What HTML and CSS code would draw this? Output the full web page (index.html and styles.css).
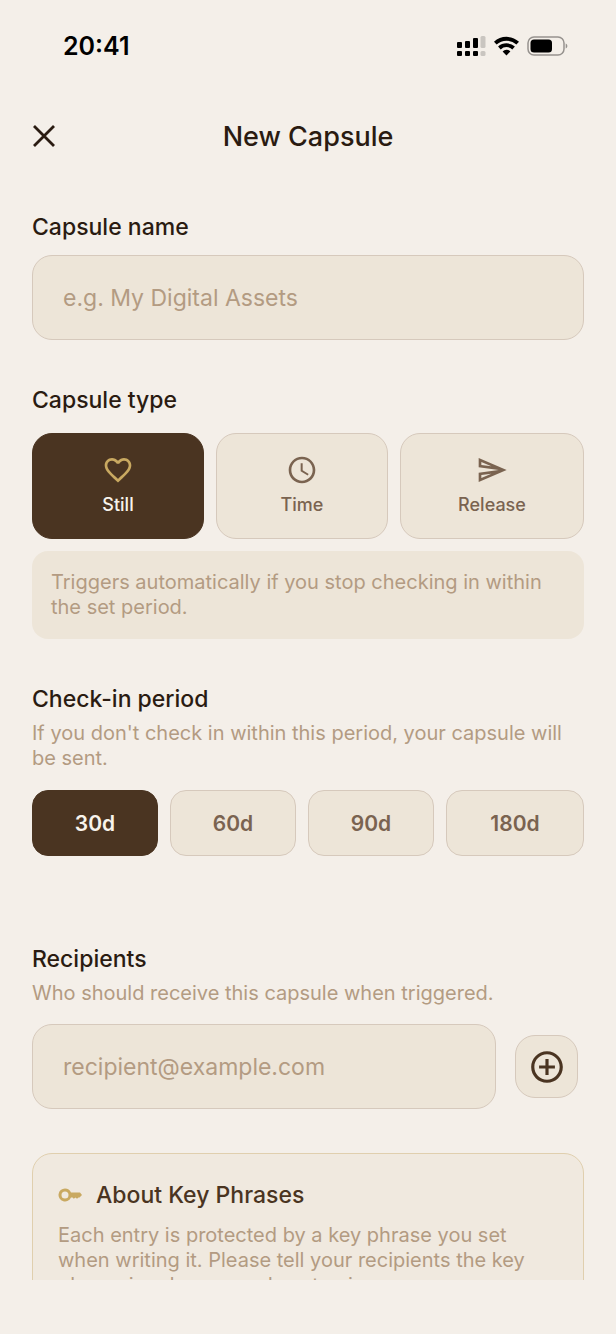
FILE: index.html
```html
<!DOCTYPE html>
<html lang="en">
<head>
<meta charset="utf-8">
<meta name="viewport" content="width=device-width, initial-scale=1">
<title>New Capsule</title>
<link rel="stylesheet" href="styles.css">
</head>
<body>
<div class="app">
  <div class="status">
    <span class="clock">20:41</span>
    <svg class="status-icons" width="112" height="22" viewBox="0 0 112 22" aria-hidden="true">
      <g fill="#000">
        <rect x="1" y="7" width="5" height="6" rx="1"/>
        <rect x="9" y="6" width="5" height="7" rx="1"/>
        <rect x="17" y="3" width="5" height="10" rx="1"/>
        <rect x="1" y="16" width="5" height="5" rx="1"/>
        <rect x="9" y="16" width="5" height="5" rx="1"/>
        <rect x="17" y="16" width="5" height="5" rx="1"/>
      </g>
      <g fill="#c9c5c0">
        <rect x="24.500" y="1" width="5" height="12" rx="1.500"/>
        <rect x="24.500" y="16" width="5" height="5" rx="1.500"/>
      </g>
      <g fill="none" stroke="#000" stroke-width="3.800">
        <path d="M39.300 8.200a16.300 16.300 0 0 1 22.400 0"/>
        <path d="M43.400 13a10.400 10.400 0 0 1 14.200 0"/>
      </g>
      <path d="M50.500 20.400l-3.900-4a5.700 5.700 0 0 1 7.800 0z" fill="#000"/>
      <rect x="72" y="2" width="36" height="18" rx="6" fill="none" stroke="#96928e" stroke-width="1.500"/>
      <rect x="74.500" y="4.500" width="21.500" height="13" rx="3.500" fill="#000"/>
      <path d="M109.700 8.500c2.200.8 2.200 4.200 0 5z" fill="#96928e"/>
    </svg>
  </div>

  <header class="header">
    <button class="close" type="button" aria-label="Close">
      <svg width="24" height="24" viewBox="0 0 24 24" fill="none" stroke="#2a1b11" stroke-width="2.800" aria-hidden="true"><path d="M2 2l20 20M22 2L2 22"/></svg>
    </button>
    <h1 class="title">New Capsule</h1>
  </header>

  <main class="content">
    <section class="section">
      <label class="label" for="name">Capsule name</label>
      <input class="field name-field" id="name" type="text" placeholder="e.g. My Digital Assets">
    </section>

    <section class="section">
      <h2 class="label">Capsule type</h2>
      <div class="choices types">
        <button class="choice type selected" type="button" aria-pressed="true">
          <svg class="gold" width="32" height="32" viewBox="0 0 24 24" fill="currentColor" aria-hidden="true"><path d="M16.500 3c-1.740 0-3.410.81-4.500 2.090C10.910 3.810 9.240 3 7.500 3 4.420 3 2 5.420 2 8.500c0 3.780 3.400 6.860 8.550 11.540L12 21.350l1.450-1.320C18.600 15.360 22 12.280 22 8.500 22 5.420 19.580 3 16.500 3zm-4.400 15.550l-.1.100-.1-.1C7.140 14.240 4 11.390 4 8.500 4 6.500 5.500 5 7.500 5c1.540 0 3.040.99 3.570 2.360h1.870C13.460 5.990 14.960 5 16.500 5c2 0 3.500 1.500 3.500 3.500 0 2.890-3.140 5.740-7.900 10.050z"/></svg>
          <span>Still</span>
        </button>
        <button class="choice type" type="button" aria-pressed="false">
          <svg width="32" height="32" viewBox="0 0 24 24" fill="currentColor" aria-hidden="true"><path d="M11.990 2C6.470 2 2 6.480 2 12s4.470 10 9.990 10C17.520 22 22 17.520 22 12S17.520 2 11.990 2zM12 20c-4.420 0-8-3.580-8-8s3.580-8 8-8 8 3.580 8 8-3.580 8-8 8zm.5-13H11v6l5.250 3.150.75-1.230-4.500-2.670z"/></svg>
          <span>Time</span>
        </button>
        <button class="choice type" type="button" aria-pressed="false">
          <svg width="32" height="32" viewBox="0 0 24 24" fill="currentColor" aria-hidden="true"><path d="M4.010 6.030l7.510 3.220-7.520-1 .01-2.220m7.500 8.720L4 17.970v-2.220l7.510-1M2.010 3L2 10l15 2-15 2 .01 7L23 12 2.010 3z"/></svg>
          <span>Release</span>
        </button>
      </div>
      <p class="note">Triggers automatically if you stop checking in within the set period.</p>
    </section>

    <section class="section period">
      <h2 class="label">Check-in period</h2>
      <p class="hint">If you don't check in within this period, your capsule will be sent.</p>
      <div class="choices days">
        <button class="choice day selected" type="button" aria-pressed="true">30d</button>
        <button class="choice day" type="button" aria-pressed="false">60d</button>
        <button class="choice day" type="button" aria-pressed="false">90d</button>
        <button class="choice day" type="button" aria-pressed="false">180d</button>
      </div>
    </section>

    <section class="section">
      <label class="label" for="recipient">Recipients</label>
      <p class="hint">Who should receive this capsule when triggered.</p>
      <div class="recipient-row">
        <input class="field" id="recipient" type="email" placeholder="recipient@example.com">
        <button class="add" type="button" aria-label="Add recipient">
          <svg width="38" height="38" viewBox="0 0 24 24" fill="currentColor" aria-hidden="true"><path d="M13 7h-2v4H7v2h4v4h2v-4h4v-2h-4V7zm-1-5C6.480 2 2 6.480 2 12s4.480 10 10 10 10-4.480 10-10S17.520 2 12 2zm0 18c-4.410 0-8-3.590-8-8s3.590-8 8-8 8 3.590 8 8-3.590 8-8 8z"/></svg>
        </button>
      </div>
    </section>

    <section class="info">
      <h2 class="info-title">
        <svg width="24" height="24" viewBox="0 0 24 24" aria-hidden="true"><path fill="#c9a961" fill-rule="evenodd" d="M7 5.500a6.500 6.500 0 1 0 6 9h1.500l1.300 1.300 1.700-1.300 1.500 1.300 1.500-1.300h1L24 12l-2-2.500h-9A6.500 6.500 0 0 0 7 5.500zm0 3a3.500 3.500 0 1 1 0 7 3.500 3.500 0 0 1 0-7z"/></svg>
        About Key Phrases
      </h2>
      <p class="info-text">Each entry is protected by a key phrase you set when writing it. Please tell your recipients the key phrase in advance and customize.</p>
    </section>
  </main>
</div>
</body>
</html>
```

FILE: styles.css
```css
* { box-sizing: border-box; }

body {
  margin: 0;
  background: #f4efe9;
  color: #2a1b11;
  font-family: Inter, "Liberation Sans", sans-serif;
}

h1, h2, p { margin: 0; }

button, input { font: inherit; }

button { cursor: pointer; }

svg { display: block; flex: none; }

.app {
  display: flex;
  flex-direction: column;
  height: 100vh;
  padding-bottom: 54px;
}

.status {
  flex: none;
  display: flex;
  align-items: center;
  justify-content: space-between;
  height: 92px;
  padding: 0 48px 0 63px;
  color: #000;
}

.clock {
  font-size: 25px;
  font-weight: 600;
}

.header {
  flex: none;
  display: grid;
  grid-template-columns: 24px 1fr 24px;
  align-items: center;
  height: 88px;
  padding: 0 32px;
}

.close {
  padding: 0;
  border: 0;
  background: none;
}

.title {
  text-align: center;
  font-size: 27px;
  font-weight: 500;
}

.content {
  flex: 1;
  min-height: 0;
  overflow-y: auto;
  scrollbar-width: none;
  padding: 31px 32px 0;
}

.section { margin-bottom: 44px; }

.period { margin-bottom: 87px; }

.label {
  display: block;
  font-size: 23px;
  font-weight: 500;
  line-height: 32px;
}

.field {
  display: block;
  width: 100%;
  min-width: 0;
  height: 85px;
  padding: 0 30px;
  border: 1px solid #d6c9bc;
  border-radius: 20px;
  background: #ede5d8;
  color: #2a1b11;
  font-size: 23px;
}

.field::placeholder {
  color: #b39b82;
  opacity: 1;
}

.name-field { margin-top: 12px; }

.choices { display: grid; }

.types {
  grid-template-columns: repeat(3, 1fr);
  margin-top: 17px;
}

.days {
  grid-template-columns: repeat(4, 1fr);
  margin-top: 19px;
}

.choice {
  padding: 0;
  border: 1px solid #d6c9bc;
  background: #ede5d8;
  color: #7a6350;
}

.choice:not(:last-child) { margin-right: 12px; }

.choice.selected {
  border-color: #4a3421;
  background: #4a3421;
  color: #f8f3ec;
}

.type {
  display: flex;
  flex-direction: column;
  align-items: center;
  gap: 6px;
  padding: 20px 0;
  border-radius: 20px;
  font-size: 18px;
  font-weight: 500;
  line-height: 26px;
}

.gold { color: #c9a961; }

.day {
  height: 66px;
  border-radius: 16px;
  font-size: 21px;
  font-weight: 600;
}

.note {
  margin-top: 12px;
  padding: 19px;
  border-radius: 16px;
  background: #ede5d8;
  color: #b39b82;
  font-size: 20px;
  line-height: 25px;
}

.hint {
  margin-top: 6px;
  color: #b39b82;
  font-size: 20px;
  line-height: 25px;
}

.recipient-row {
  display: flex;
  align-items: center;
  gap: 19px;
  margin-top: 18px;
  padding-right: 6px;
}

.add {
  flex: none;
  display: grid;
  place-items: center;
  width: 63px;
  height: 63px;
  padding: 0;
  border: 1px solid #d6c9bc;
  border-radius: 20px;
  background: #ede5d8;
  color: #4a3421;
}

.info {
  padding: 25px;
  border: 1px solid #e0cfae;
  border-radius: 20px;
  background: #f0e9df;
}

.info-title {
  display: flex;
  align-items: center;
  gap: 14px;
  color: #4a3421;
  font-size: 23px;
  font-weight: 500;
  line-height: 32px;
}

.info-text {
  margin-top: 12px;
  color: #b39b82;
  font-size: 20px;
  line-height: 25px;
}
```
